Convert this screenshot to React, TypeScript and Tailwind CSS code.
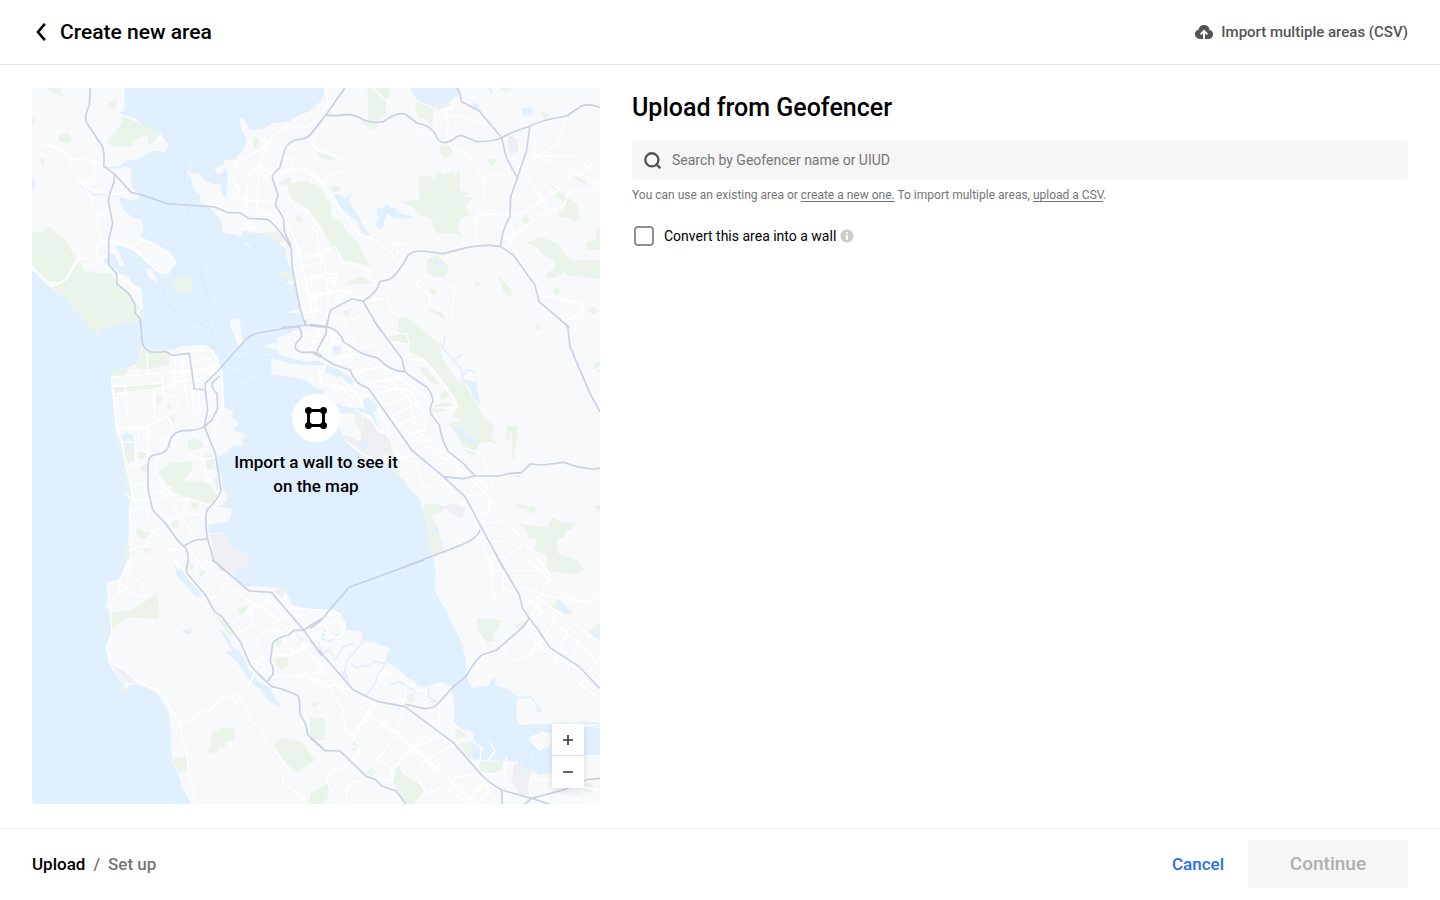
type Sheet = {
  x: number;
  y: number;
  water: string;
  land?: string;
  parks: string;
  urban?: string;
  lakes?: string;
  creeks?: string;
  ferries?: string;
  streets: string;
  highways: string;
};

/* The map is cut into six sheets, each drawn at three times its final scale. */
const sheets: Sheet[] = [
  {
    x: 32,
    y: 80,
    water:
      "M278 20L880 20L870 60L830 95L800 105L770 125L720 130L690 148L655 150L640 122L630 113L622 120L630 150L643 180L640 200L610 238L580 240L575 252L548 265L555 283L572 280L580 262L588 285L583 355L572 345L565 310L545 312L515 300L503 280L480 282L463 272L480 300L487 330L505 345L505 365L530 380L555 405L572 430L568 455L600 462L628 472L632 450L660 458L680 460L730 455L745 470L740 490L760 505L765 540L775 565L785 590L760 612L788 612L800 660L805 685L765 698L808 700L815 735L740 745L700 750L328 750L330 690L328 625L300 610L290 590L262 580L240 560L215 545L230 525L245 520L262 555L280 560L262 520L250 500L262 495L300 510L345 545L385 582L410 575L433 548L415 515L375 495L340 478L325 470L335 450L330 420L300 412L275 390L260 350L300 365L325 350L300 320L295 265L270 255L230 264L262 262L280 245L330 232L360 212L400 215L410 195L385 160L340 140L310 115L262 100L278 90Z M0 572L15 580L30 600L60 628L100 650L130 690L160 725L190 750L0 750Z M0 298L12 302L6 310L12 322L0 328Z",
    land: "M345 560L362 570L378 608L352 595L342 572Z M595 722L608 715L622 722L628 755L600 755Z M632 488L650 492L660 505L650 500Z",
    parks:
      "M0 455L28 455L50 438L100 480L132 535L100 595L75 610L45 610L0 560Z M60 625L105 600L140 540L160 575L200 578L240 580L255 610L290 640L310 670L330 690L345 700L330 712L325 725L260 732L210 745L196 762L165 728L130 690L100 650Z M275 110L345 140L375 150L385 165L360 190L345 190L350 170L335 165L310 180L300 200L250 200L225 185L245 160L262 140Z M225 72L255 57L253 90L228 82Z M30 20L80 20L100 55L70 40Z M665 172L680 175L683 205L665 205Z M0 110L10 120L0 140Z M80 165L110 160L122 180L105 192L80 180Z M738 312L775 290L780 310L830 302L850 335L880 342L880 450L830 390L775 350L765 315Z M25 235L40 235L36 255L27 250Z M455 588L475 590L484 625L480 645L450 640L418 625L425 605Z M790 405L810 410L812 430L795 425Z M728 520L770 525L735 526Z M740 575L760 572L785 590L785 605L755 595Z M700 458L735 455L765 480L740 490Z",
    creeks: "M145 318L165 328L178 345L210 342L250 348 M230 264L265 262L285 244",
    ferries:
      "M720 30C560 90 440 170 458 300L470 420L555 750 M270 355C380 380 430 470 480 540S530 680 510 750 M400 610C380 640 420 700 470 750 M420 590C460 560 520 570 520 640 M330 635L540 750 M458 372L512 415L550 390",
    streets:
      "M0 155L35 195L75 200L110 235L160 240L210 250 M110 235L145 305L180 350L182 385L205 405L195 430L203 480L190 520L210 550 M190 250L185 300L145 310 M170 325L235 345L300 335 M195 405H235 M0 560L45 605L75 610L100 600L140 535L165 535L175 555L210 550L235 575 M203 480L260 490L300 500L335 480L375 495L405 520L430 548L405 582L370 570L305 505 M260 590L290 610L325 630L330 680L315 700 M60 200L90 210L110 235 M870 112L825 140L765 140L735 160L710 185L680 210L645 230L610 245L605 310L625 330L600 360L580 390 M710 185L690 230L680 290L672 403 M643 440L643 350L650 280L680 260L740 290 M615 358L730 365 M672 403L755 405 M672 378L740 440 M710 185L712 220L740 235L785 235L775 265L690 290 M870 310L820 270L790 265L740 285 M740 345L775 360L790 380L830 400L870 460 M755 410L790 480L810 560L830 640L855 750 M785 480L800 500L840 700 M785 530L870 527 M785 560L870 550 M785 605L870 590 M800 665L870 645 M810 700L870 690 M835 165L850 200L870 215 M650 420L650 450L685 430",
    highways:
      "M175 20L172 75Q155 110 165 130L205 190Q220 205 215 258L248 283L298 338Q320 340 405 371L548 381L585 397L625 399L650 415L705 418Q730 430 778 505L780 560L805 690L820 735 M248 283C250 330 225 330 230 370L242 430L230 480L230 555L253 580L255 612L290 640L308 670L310 700L325 718L328 750 M870 120L835 165Q820 178 790 180Q760 190 755 220L743 265Q715 285 723 300L738 345L730 375L755 415L757 455L778 500",
  },
  {
    x: 310,
    y: 80,
    water:
      "M-10 20L40 20L30 60L15 78L-10 90Z M298 20L450 20L445 45L405 75L370 82L320 60Z M530 20L548 28L545 42Z M485 68L505 72L510 92L490 85Z M635 87L668 82L668 105L640 108Z",
    parks:
      "M172 20L240 20L242 40L228 60L228 105L200 128L206 138L190 150L155 130L175 118Z M320 65L370 85L368 145L350 120L325 110L315 85Z M370 75L415 65L420 78L385 90Z M390 200L400 193L425 200L430 225L405 235L390 220Z M530 235L562 240L555 252L540 262Z M330 290L362 285L370 300L385 272L400 285L430 275L430 290L448 268L450 330L475 340L460 352L490 352L465 375L475 395L485 400L450 420L445 440L460 472L425 460L380 460L365 430L370 418L330 405L305 380L268 362L330 360L325 325Z M-10 310L25 315L45 350L62 370L65 415L95 425L110 455L145 490L160 525L185 560L130 545L100 545L60 490L30 430L-10 380Z M57 325L72 315L95 325L75 340Z M350 540L380 525L418 560L405 590L370 590L350 575Z M565 588L582 605L600 625L608 655L580 635Z M500 593L510 615L492 620Z M638 485L665 485L690 470L745 490L760 520L785 540L870 540L870 598L815 590L770 585L760 575L738 595L708 598L708 580L735 565L735 545L700 525L680 500Z M828 485L858 480L858 445L870 445L870 510L828 510Z M692 278L745 335L770 350L800 370L810 410L795 430L775 415L745 412L748 395L765 390L760 365L735 350L740 340Z M780 285L805 290L825 303L830 315L800 300Z M635 415L650 405L657 425L645 433Z M22 215L75 235L70 243L30 232Z M560 20L615 20L590 38Z M690 93L722 105L705 120Z M112 605L150 590L185 600L175 610L112 615Z M358 622L385 632L375 645L362 640Z M345 682L400 700L405 718L370 700Z M268 715L330 755L265 755Z M828 692L850 680L870 692L850 702Z M735 620L755 628L740 645L730 635Z M675 735L690 732L695 745L680 748Z M100 695L130 682L110 710Z M235 515L255 505L250 525Z",
    urban: "M597 165L625 180L625 215L600 222L592 190Z",
    lakes:
      "M70 345L85 342L105 355L130 332L115 362L130 385L150 415L155 430L165 445L182 468L155 460L145 430L110 400L80 370Z M200 385L215 385L232 372L240 382L260 385L255 395L300 408L315 415L250 415L232 400L222 420L222 440L205 450L195 430L210 415L200 400Z M370 550L385 540L405 550L380 562Z",
    streets:
      "M45 20L55 75L80 100 M185 20L240 70L265 100 M0 180L20 210L60 222L100 240L118 260L105 275L60 285L40 310L0 270 M40 310L75 360L100 400L150 465L185 475L240 515L265 550L320 615L355 640L360 670L425 710L433 625L360 590L330 600L320 615 M318 135L325 155L360 162L385 188 M395 95L415 120L410 180L430 208L455 210L490 250L525 305L520 375L503 395L495 440L503 495 M395 95L450 70 M410 105L450 110L530 135 M525 305L545 285L600 282 M503 410L530 402L600 403L635 400L700 360L745 330L770 300L790 275 M590 225L598 290 M625 262L680 228L870 310 M680 228L800 230L835 265L870 230 M835 265L790 290 M665 145L675 185L668 205L680 228L745 190L760 150L770 108 M635 262L720 395 M870 320L840 335L800 328L775 335L765 375L720 395L680 410L640 450L580 470L600 480L620 520L660 590L690 650L730 648L820 675L815 705L770 720 M600 410L610 460L595 500H575 M505 495L440 512L400 521 M245 520L250 490L305 495L300 515 M0 430L20 460L30 520L45 560L55 640L50 740 M55 640L85 590L55 600L90 605 M0 525H30L75 500L100 545L180 570L175 600L210 605 M0 590L80 580 M0 645L110 630L160 660 M65 690L110 630 M75 715L125 720L170 700 M0 590L20 690 M160 663L230 655L240 690L270 710",
    highways:
      "M107 20L48 104L0 165 M48 104Q70 110 110 103Q140 105 160 120Q190 132 220 125Q260 95 285 102L325 132Q350 130 375 160Q385 190 405 188Q425 185 440 170Q455 162 475 175L500 185Q550 185 575 173L600 160L660 138Q690 122 770 108L815 78Q835 70 870 82 M440 20L450 40L455 65L508 93L575 173L582 205L590 235L620 290 M660 138L650 210L625 285L602 350L600 410Q575 450 572 500 M0 737L50 742Q55 710 62 690L125 657L160 663Q200 640 210 605L240 598Q265 580 295 525Q310 512 335 513L400 521L470 503Q510 495 540 496L572 500L610 525L675 615L687 665L778 742 M158 663L210 750",
  },
  {
    x: 32,
    y: 320,
    water: "M0 0H855V750H0Z",
    land: "M330 78L370 90L420 90L450 78L520 75L545 90L560 115L570 150L575 260L605 275L600 290L620 310L605 330L650 348L630 355L635 380L600 375L590 395L555 410L550 450L570 480L575 515L585 520L585 545L555 560L600 565L590 605L530 615L530 640L575 640L590 670L620 690L655 715L645 740L600 735L605 760L270 760L285 720L290 640L290 530L280 450L265 380L250 330L242 230L235 170L260 147L285 145L315 130Z M595 0L625 -5L625 30L635 68L618 78L605 35L595 15Z M880 -10L812 -10L812 20L760 45L735 52L735 65L690 80L735 88L740 105L820 125L880 120Z M718 115L780 132L880 137L880 212L850 205L820 180L800 175L718 162Z",
    parks:
      "M165 -6L325 -6L325 5L260 10L210 25L195 50L188 25Z M335 80L370 92L415 100L410 135L345 148L310 145Z M245 150L290 145L280 165L240 168Z M245 202L390 192L385 210L250 222Z M375 230L388 228L388 250L375 250Z M405 250L418 250L410 275Z M410 290L428 292L425 312Z M270 345L308 350L308 425L285 430L275 380Z M255 350L275 380L290 450L300 540L288 560L285 480Z M315 395L345 400L345 415L320 418Z M328 435L345 430L345 455L328 452Z M470 360L485 355L510 365L515 380L480 392L465 378Z M380 455L420 425L440 430L480 420L480 450L455 480L480 485L500 480L520 490L545 490L560 520L560 535L530 555L480 540L425 515L400 490Z M520 400L545 405L548 440L535 450L520 440Z M580 390L598 392L580 405Z M315 625L355 640L335 658L312 645Z M330 685L365 688L345 702Z M285 672L305 690L310 700L280 720Z M430 598L445 605L435 625L410 622Z M475 550L500 545L500 562L485 568Z",
    urban: "M535 645L570 640L590 670L620 690L655 715L645 740L600 735L595 760L560 750L545 700Z",
    lakes: "M268 345L285 338L303 345L285 362L310 385L303 395L270 365Z M545 480L555 470L560 515Z",
    ferries:
      "M530 70C560 140 650 110 720 112 M560 130L720 220L770 245 M570 155C660 180 700 200 688 290C700 380 660 500 600 565 M545 90L500 0 M555 100L530 0",
    streets:
      "M238 172L255 320L270 370L290 470L305 540L320 560L295 580L300 680L290 750 M238 172L470 152 M243 222L430 200 M240 200L385 190 M278 200L290 320 M320 148L315 180 M345 100L348 180 M390 165L395 230L430 230L440 275H395 M430 110L425 200 M445 100L470 280 M480 208L485 280H525 M498 210L505 275 M425 160L560 140 M425 185L520 175 M365 210L370 320 M255 325L340 322L405 290L420 310L425 335 M325 325L318 365H270 M340 325L365 350L400 360 M350 320L345 430L290 440 M310 350L310 425 M540 90L570 155L575 260L555 310L540 380 M487 207H560 M445 340L420 385L380 405 M430 388L515 420L550 410 M515 420L520 460L565 535L535 555L470 535L455 575L400 610L360 640L335 680L290 690 M375 410L370 460L395 500L440 540L470 535 M365 520L420 500 M365 545L400 525L455 600L490 655 M305 540L360 540 M310 500L335 490L345 520 M320 560L345 570L350 610L370 640L420 700L440 750 M455 575L520 590 M300 540L280 520 M470 685L520 750 M415 690L460 685 M490 150L510 180 M500 145L545 165 M495 165L550 130 M490 185L545 150L560 125 M440 130L540 115 M450 95L520 90 M870 50L820 45L800 75 M830 110L870 80 M860 140L870 200 M850 60L850 97",
    highways:
      "M325 0L331 70Q340 97 370 97L400 94L420 106L472 100L487 207L520 208L520 190L560 150L640 60Q655 42 700 35L820 15L870 18 M520 208L527 270L517 320Q500 332 455 332Q415 335 410 380Q400 403 365 405Q347 410 348 440L348 510L362 570L400 610L440 665L462 685Q475 715 462 750 M562 168L540 190Q540 210 555 220L557 265L540 300L517 320L550 400L567 510Q565 530 525 570Q518 590 525 650L545 720L575 750 M455 678L490 660L530 657 M820 0L820 15 M750 22L800 20Q820 50 795 65Q780 90 810 97L850 97L870 108",
  },
  {
    x: 310,
    y: 320,
    water:
      "M0 115L30 122L60 140L90 150L130 180L125 195L90 175L50 160L30 150L0 135Z M65 80L95 78L85 105L70 100Z M0 205L40 207L40 225L75 248L110 262L160 265L160 240L175 232L205 265L190 280L210 330L190 310L185 285L150 285L130 280L90 280L80 310L110 370L150 400L190 425L240 430L265 465L290 500L325 530L340 570L355 640L365 700L372 755L0 755Z",
    parks:
      "M265 -10L290 -10L350 40L385 70L400 120L440 180L460 185L490 235L520 290L555 320L545 350L565 375L540 365L510 370L490 405L470 400L455 370L430 330L410 310L455 300L425 290L440 270L440 240L415 205L380 160L340 115L300 95L295 75L235 60L235 50L265 45Z M325 140L350 145L365 165L390 190L370 192L350 175Z M395 215L420 208L422 232L390 240Z M362 262L400 248L432 250L405 272L365 282Z M590 320L622 315L622 345L612 420L605 410L605 335L600 335L598 360L588 360Z M340 552L375 550L410 560L395 575L365 585L385 630L400 680L415 700L365 705L350 620Z M625 612L680 620L710 620L730 592L750 605L795 612L785 630L765 632L765 650L740 660L745 700L825 755L715 755L710 705L675 690L680 660L655 655L650 630Z M612 550L640 556L675 562L678 572L665 580L640 575L665 570L620 562Z M848 558L870 555L870 578Z M850 130L870 125L870 155L850 150Z M135 285L155 290L155 335L135 310Z M228 350L240 360L250 400L270 470L300 495L290 502L250 450L230 400Z M605 465L640 463L625 473Z M675 15L690 12L695 25L685 32Z M180 232L195 240L205 265Z",
    urban:
      "M160 290L185 300L205 340L230 345L230 400L200 425L95 350L110 345L150 365Z M400 560L430 550L465 565L455 595L430 585Z",
    lakes:
      "M148 365L165 360L175 385L150 392Z M370 628L380 622L388 632L378 642Z M455 180L490 185L498 180L510 255L490 235L480 200Z M445 310L458 330L470 352L505 342L480 378L455 345L438 338Z M10 205L40 207L40 222Z",
    creeks: "M405 52L398 85L430 120L455 150L458 180L490 188 M430 120L455 105 M460 165L470 148L492 155 M400 85L390 70",
    streets:
      "M0 60L100 65 M60 80L50 130L30 160V190L75 195L130 230L120 260 M30 120L75 115L155 100 M80 130L120 90L190 75 M130 175L170 140L200 115 M120 155L230 140 M145 190L240 180L290 160 M260 40H290L298 75L250 65 M285 115L340 120L370 150L400 190L443 260L425 265L370 262 M215 140L350 230L360 260 M180 195L300 215L350 290L340 350 M240 180L300 240L320 330L400 400L460 430 M200 225L250 205L310 210 M215 260L300 225 M240 290L330 245 M255 320L340 280 M270 345L345 330 M290 365L365 360 M175 200L230 280L330 360L480 470L545 545L710 750 M200 260L240 340 M270 415L360 380L375 400 M270 415L330 430L320 450L345 505L400 480 M385 430L440 430L415 395 M440 430V470 M435 395L445 380L520 400L532 455 M410 490L440 540L480 560L545 750 M465 530L530 520 M450 552L490 545 M475 595L540 570L535 545 M520 610L545 540 M530 610L580 603 M505 665H600 M530 713H585L635 675 M495 468L545 520 M555 510L545 480L610 460 M800 0L795 30L870 65 M870 140L825 175 M825 185L850 210 M60 190L120 255L165 265 M90 170L140 230 M70 195L140 215L160 260 M0 95L30 20 M60 0L70 80 M85 20L60 90 M135 270L180 290L205 330L240 350 M100 0L150 100",
    highways:
      "M0 12L50 20Q90 30 100 65L155 100L205 115Q240 155 285 155 M190 0L275 115L285 155Q300 170 350 200Q370 225 368 245Q355 265 365 285L388 315Q395 360 415 395L460 430L495 468L570 468L600 460L635 458L660 432L700 435L760 427L800 440L845 447L870 445 M0 95L40 115L75 135L120 150Q130 175 145 190L175 205L305 390L400 470L465 530L583 750 M400 470L460 476L495 468 M52 0L48 40L20 95 M258 750L440 680Q500 660 510 630 M750 0Q778 15 775 40L780 80L840 220L870 275",
  },
  {
    x: 32,
    y: 560,
    water:
      "M0 -10L285 -10L280 20L268 45L260 60L225 65L222 75L228 110L222 140L238 165L240 210L222 260L230 310L255 350L268 370L275 400L290 378L310 372L340 380L375 400L410 460L418 520L420 605L440 640L450 680L478 735L0 735Z M640 -10L870 -10L870 155L780 135L760 90L720 80L640 78L610 55L600 35L650 15Z",
    parks:
      "M238 160L300 150L378 100L380 177L340 175L285 172L240 210Z M540 515L565 512L568 503L607 503L607 540L580 545L580 562L557 562L557 575L540 583L525 568L535 560Z M725 555L735 540L760 533L810 545L850 600L795 638L760 610L755 600Z M420 600L440 590L465 590L465 635L440 635Z M555 170L580 180L605 225L590 230Z M720 90L765 85L750 112Z M620 145L650 135L635 165L618 160Z M500 35L515 30L523 42L505 52Z M470 15L480 8L487 15L475 35Z M735 235L752 240L740 260L728 250Z M790 225L820 235L800 255Z M725 300L745 290L768 295L768 320L745 328Z M245 320L275 365L285 400L275 400L265 360Z M835 490L862 470L880 480L880 540L845 540Z M820 720L870 712L880 735L830 735Z M838 430L865 422L845 440Z M405 455L413 480L417 500Z",
    urban: "M555 -10L655 -10L640 20L600 35Z M245 318L270 330L300 350L305 370L280 365Z",
    lakes:
      "M430 15L450 30L470 60L500 90L508 115L490 110L460 75L432 45Z M560 205L575 215L590 235L605 265L620 270L635 290L650 330L665 345L680 365L715 385L725 405L740 430L742 442L705 420L690 390L665 375L645 350L610 300L578 275L600 275L590 255Z M430 192L455 208L470 210L475 198L480 218L465 224L455 212Z",
    ferries: "M285 402L310 408L350 392",
    streets:
      "M310 0L280 25L260 65L265 95L240 125L235 160L240 220L225 265L240 305L330 370L395 400L410 440L448 490L447 520L465 580L470 650L495 732 M285 35L330 70L340 115L300 100L265 70 M448 490L475 485L500 460L530 452L575 412L600 405L612 430L625 400L655 370L665 345 M615 400L640 440L655 480L690 510L700 550L725 570L775 630L752 650L755 670L785 690L820 720L830 732 M520 0L580 70L660 130L700 145L735 180L800 240L870 320 M430 0L470 50 M530 115L560 105L575 75 M600 190L655 150L668 195L620 215L610 230 M655 150L665 135 M655 300L690 310L720 350 M710 205L680 235L670 270L710 310 M710 205L740 215L775 270L820 345L870 335 M720 350L820 345L870 380 M735 180L775 145L870 150 M690 140L710 120L750 160L800 210 M775 270L800 275L850 230 M740 220L730 185L770 150 M820 345L850 370 M780 140L830 200L870 190 M725 285L775 285L810 262",
    highways:
      "M470 0Q460 20 465 40L520 105L548 155L570 170L625 245L655 315Q680 345 720 380L750 387L795 405Q805 415 803 460L820 490L828 525L870 563 M540 0L560 15L652 93L718 97L815 210L870 288 M705 365L722 345Q728 325 715 305L722 250Q730 235 770 225L785 212L815 210L870 175",
  },
  {
    x: 310,
    y: 560,
    water:
      "M0 -10L368 -10L378 40L372 85L385 115L410 150L418 180L450 235L468 300L468 350L485 385L540 375L545 358L555 352L555 375L600 390L620 410L620 480L628 495L750 490L800 492L820 500L870 505L870 585L745 585L725 640L690 645L660 628L630 628L620 605L605 605L530 600L485 598L490 515L460 510L430 490L435 450L425 380L395 365L345 380L320 375L310 360L290 355L285 345L262 325L240 310L225 310L230 290L240 265L185 245L160 245L155 215L110 210L105 185L75 148L30 150L0 138Z",
    land: "M660 530L700 515L725 520L720 560L690 570L670 545Z",
    parks:
      "M500 175L575 180L565 205L550 215L555 245L530 245L505 215Z M530 248L550 262L535 262Z M610 195L650 180L658 190L625 210Z M725 145L745 115L790 162L740 150Z M835 215L870 190L870 245Z M715 -10L785 -10L825 28L800 42L715 35Z M0 470L25 480L40 492L15 540L0 545Z M120 555L135 545L145 565L130 577Z M250 670L255 625L268 618L275 640L320 665L342 690L310 732L285 732L270 710Z M510 605L580 603L578 630L545 640L510 635Z M435 510L460 500L468 530L440 540Z M448 550L490 545L480 600Z M290 405L315 400L312 425L292 425Z M0 700L60 668L50 720L20 735L0 735Z M825 670L850 670L845 700L825 695Z M640 630L665 630L650 680Z M165 640L185 622L200 638L185 648Z M0 430L35 425L15 440Z M0 588L12 600L0 610Z",
    urban: "M612 610L635 625L655 650L655 700L635 712L605 665Z M85 335L105 335L120 362L100 355Z",
    lakes: "M740 135L745 120L785 160L765 165Z M845 220L868 215L868 228L850 232Z",
    creeks:
      "M25 245L35 280L60 270L75 300L100 260L130 250 M160 240L140 270L110 300L105 335L115 360 M120 310L140 325L160 315L175 320L190 305L225 310L205 345L195 370L165 410 M240 375L270 365L300 385L320 400 M355 380V410L380 425H360 M620 412L665 412L680 435L685 458L693 450L690 440 M45 210L35 235L60 245L90 220 M810 488L870 490 M835 505L870 498 M745 585L730 610L680 620",
    ferries: "M735 640L720 615 M590 560L575 600 M660 560L650 620",
    streets:
      "M10 160L50 150L90 160L105 195L95 225L70 235L40 215L15 220L0 200 M30 170L60 190L80 180L95 195 M20 190L50 200L60 235 M0 150L30 185L45 170L70 165 M545 0L548 125L580 85L620 100 M548 32H580 M580 32V85 M605 32H715L720 45L690 110L650 200 M655 0L720 60L770 110L840 130L870 165 M575 60L720 110L840 130L850 105L870 95 M680 110L870 250 M660 120L850 290 M640 135L680 115 M700 150L645 210 M740 170L690 250 M780 195L735 310 M810 230L770 340 M645 215L700 270L870 365 M660 215L680 225L695 270 M580 245L590 285L620 300L665 285L680 250 M870 290L810 375L870 415 M720 265L660 200 M0 290L130 425L175 460L320 570L450 690L490 732 M0 350L60 380L100 450L105 510L90 540L150 570L240 620 M45 380L75 375L130 395 M175 460L140 510L110 530 M175 460L195 410L210 340L235 345 M205 425L160 480L125 550 M230 480L160 560 M270 510L200 600 M310 560L240 640 M385 530L320 560L300 590 M435 550L350 600L300 560 M345 530L265 610 M390 430L385 520 M280 440L255 520 M415 590L370 630L350 600 M415 690L440 650L550 640L555 670 M415 690L480 732 M450 690L500 650 M490 700L550 660 M470 732L530 650 M240 620L250 660L180 660L130 665L110 690V732 M80 732L50 660L60 635L110 620L150 570 M140 500L190 470 M220 490L280 530 M345 600L320 650L350 700L400 680 M510 640L560 732 M590 590L580 690 M300 380L315 375L320 395L350 390 M290 355L285 435 M210 350L225 330L240 345L215 355 M430 490L460 515 M500 732L540 690 M675 655L870 690 M690 732L720 700L870 732 M490 545L520 570 M515 560L510 600 M540 545L555 575L535 600 M700 515L660 540L690 570",
    highways:
      "M343 0L117 82L50 160Q35 185 0 205 M0 240L130 390L160 405L205 425L285 440L430 548L510 640Q530 665 575 690L665 715L725 735 M285 432L340 445Q370 448 385 430L430 380L468 350Q485 315 515 285L560 270L640 200L658 175 M567 0L628 105L638 145L658 175L685 210L720 263L805 318L870 385 M0 533L45 572L90 573L170 650L195 658L215 678L258 693L290 735 M575 690L577 735 M640 735L665 715L760 690L835 658L870 655",
  },
];

function Layer({ name, className, width }: { name: Exclude<keyof Sheet, "x" | "y">; className: string; width?: number }) {
  return (
    <g
      className={className}
      strokeWidth={width}
      strokeLinecap={name === "highways" ? "butt" : "round"}
      strokeLinejoin="round"
    >
      {sheets.map((s) => (
        <path key={`${s.x}-${s.y}`} transform={`translate(${s.x} ${s.y}) scale(0.33333)`} d={s[name] ?? ""} />
      ))}
    </g>
  );
}

function BayMap() {
  return (
    <svg
      viewBox="32 88 568 716"
      preserveAspectRatio="xMidYMid slice"
      className="absolute inset-0 size-full"
      role="img"
      aria-label="Map of the San Francisco Bay Area"
    >
      <rect x="32" y="88" width="568" height="716" className="fill-[#f7f9fb]" />
      <Layer name="water" className="fill-[#e1f0fe]" />
      <Layer name="land" className="fill-[#f7f9fb]" />
      <Layer name="ferries" className="fill-none stroke-[#dae8f7]" width={2} />
      <Layer name="parks" className="fill-[#ebf4eb]" />
      <Layer name="urban" className="fill-[#eeeff3]" />
      <Layer name="lakes" className="fill-[#e1f0fe]" />
      <Layer name="creeks" className="fill-none stroke-[#e1f0fe]" width={5} />
      <Layer name="streets" className="fill-none stroke-white" width={4} />
      <Layer name="highways" className="fill-none stroke-[#c9d2e4]" width={5} />
    </svg>
  );
}

function ChevronIcon() {
  return (
    <svg viewBox="0 0 12 18" className="h-[18px] w-3" fill="none" stroke="currentColor" strokeWidth="2.6">
      <path d="M9.8 0.8L3 9l6.8 8.2" />
    </svg>
  );
}

function CloudUploadIcon() {
  return (
    <svg viewBox="0 0 18 14" className="h-3.5 w-[18px]">
      <path
        fill="currentColor"
        d="M14.6 4.9A5.7 5.7 0 0 0 9 0a5.7 5.7 0 0 0-5.5 4.7A4.7 4.7 0 0 0 0 9.3C0 12 2 14 4.7 14h8.7A4.6 4.6 0 0 0 18 9.4a4.6 4.6 0 0 0-3.4-4.5Z"
      />
      <path d="M9 14V6.4M5.6 9.4L9 6l3.4 3.4" fill="none" stroke="#fff" strokeWidth="2" />
    </svg>
  );
}

function SearchIcon() {
  return (
    <svg viewBox="0 0 16 16" className="size-[17px]" fill="none" stroke="currentColor" strokeWidth="2.2">
      <circle cx="7.4" cy="7.4" r="6.2" />
      <path d="M11.6 11.6l3.7 3.7" />
    </svg>
  );
}

function InfoIcon() {
  return (
    <svg viewBox="0 0 14 14" className="size-3.5">
      <circle cx="7" cy="7" r="6.5" fill="#cbcbcb" />
      <path d="M6 3.2h2v1.8H6zM6 6.1h2v4.6H6z" fill="#fff" />
    </svg>
  );
}

function PolygonIcon() {
  return (
    <svg viewBox="0 0 24 24" className="size-6">
      <rect x="4.5" y="4.5" width="15" height="15" fill="none" stroke="#000" strokeWidth="3" />
      <circle cx="4.5" cy="4.5" r="3.5" />
      <circle cx="19.5" cy="4.5" r="3.5" />
      <circle cx="4.5" cy="19.5" r="3.5" />
      <circle cx="19.5" cy="19.5" r="3.5" />
    </svg>
  );
}

export default function App() {
  return (
    <div className="flex min-h-screen flex-col bg-white font-['Roboto','Liberation_Sans',sans-serif] text-black">
      <header className="flex h-[65px] items-center justify-between border-b border-[#e2e2e2] px-8">
        <div className="flex items-center gap-2.5">
          <button type="button" aria-label="Back" className="flex w-[18px] justify-center">
            <ChevronIcon />
          </button>
          <h1 className="text-[21px] leading-7 font-medium">Create new area</h1>
        </div>
        <button type="button" className="flex items-center gap-2 text-[15px] font-medium text-[#545454]">
          <CloudUploadIcon />
          Import multiple areas (CSV)
        </button>
      </header>

      <main className="grid flex-1 grid-cols-[568fr_776fr] gap-8 px-8 pt-[23px] pb-6">
        <section className="relative flex items-center justify-center overflow-hidden rounded">
          <BayMap />
          <div className="relative flex flex-col items-center gap-2">
            <div className="flex size-12 items-center justify-center rounded-full bg-white">
              <PolygonIcon />
            </div>
            <p className="w-44 text-center text-[17px] leading-6 font-medium">Import a wall to see it on the map</p>
          </div>
          <div className="absolute right-4 bottom-4 flex w-8 flex-col divide-y divide-[#e2e2e2] bg-white shadow-[0_2px_8px_rgba(0,0,0,0.12)]">
            <button type="button" aria-label="Zoom in" className="flex h-8 items-center justify-center">
              <svg viewBox="0 0 10 10" className="size-2.5" stroke="#333" strokeWidth="1.6">
                <path d="M0 5h10M5 0v10" />
              </svg>
            </button>
            <button type="button" aria-label="Zoom out" className="flex h-8 items-center justify-center">
              <svg viewBox="0 0 10 10" className="size-2.5" stroke="#333" strokeWidth="1.6">
                <path d="M0 5h10" />
              </svg>
            </button>
          </div>
        </section>

        <section>
          <h2 className="text-[25px] leading-10 font-medium">Upload from Geofencer</h2>
          <label className="mt-3 flex h-10 items-center gap-[11px] rounded bg-[#f6f6f6] px-3 text-[#545454]">
            <SearchIcon />
            <input
              type="search"
              aria-label="Search by Geofencer name or UIUD"
              placeholder="Search by Geofencer name or UIUD"
              className="min-w-0 flex-1 bg-transparent text-sm text-black outline-none placeholder:text-[#757575]"
            />
          </label>
          <p className="mt-[5px] text-xs leading-5 text-[#757575]">
            You can use an existing area or{" "}
            <a href="#new" className="underline underline-offset-2">
              create a new one.
            </a>{" "}
            To import multiple areas,{" "}
            <a href="#csv" className="underline underline-offset-2">
              upload a CSV
            </a>
            .
          </p>
          <div className="mt-[21px] flex items-center gap-1 pl-0.5">
            <label className="flex items-center gap-2.5 text-sm">
              <input
                type="checkbox"
                className="size-5 appearance-none rounded border-2 border-[#8f8f8f] bg-white checked:bg-black"
              />
              Convert this area into a wall
            </label>
            <InfoIcon />
          </div>
        </section>
      </main>

      <footer className="flex h-[72px] items-center justify-between border-t border-[#eeeeee] px-8 pb-px">
        <nav aria-label="Steps" className="flex gap-2 text-[17px] leading-6 font-medium text-[#757575]">
          <span className="text-black">Upload</span>
          <span>/</span>
          <span>Set up</span>
        </nav>
        <div className="flex items-center gap-6">
          <button type="button" className="text-[17px] leading-6 font-medium text-[#276ef1]">
            Cancel
          </button>
          <button
            type="button"
            disabled
            className="h-12 w-40 bg-[#f6f6f6] text-[19px] font-medium text-[#afafaf]"
          >
            Continue
          </button>
        </div>
      </footer>
    </div>
  );
}
